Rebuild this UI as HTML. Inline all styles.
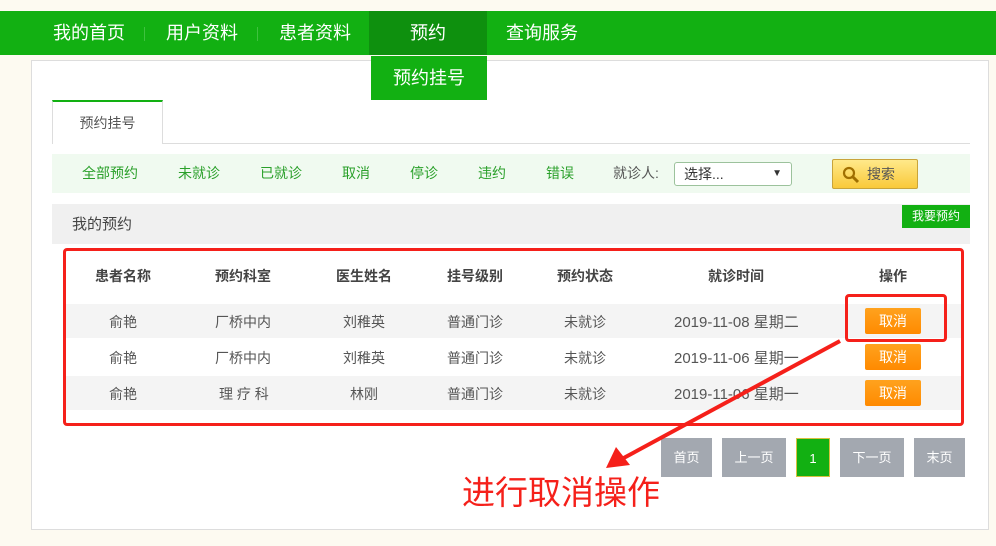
<!DOCTYPE html><html><head><meta charset="utf-8"><style>
*{margin:0;padding:0;box-sizing:border-box}
body{width:996px;height:546px;background:#fdfaf1;font-family:"Liberation Sans","Noto Sans CJK SC",sans-serif;position:relative;overflow:hidden}
.a{position:absolute}
.nav{left:0;top:11px;width:996px;height:44px;background:#12b012}
.nav span{position:absolute;top:0;line-height:44px;color:#fff;font-size:18px}
.sep{position:absolute;top:16px;width:1px;height:14px;background:#3fc23f}
.c{text-align:center}
.th{font-size:14px;color:#444;font-weight:bold}
.td{font-size:14px;color:#555}
.dt{font-size:15px;color:#555}
.btn{background:linear-gradient(#ffa21e,#ff8a00);color:#fff;font-size:14px;border-radius:2px;width:56px;height:26px;line-height:26px;text-align:center}
.pg{top:438px;height:39px;line-height:39px;background:#a3a8b0;color:#fff;font-size:13px;text-align:center}
.f{top:154px;line-height:39px;font-size:14px;color:#2aa02a}
</style></head><body>
<div class="a nav">
<span style="left:53px">我的首页</span><div class="sep" style="left:144px"></div>
<span style="left:166px">用户资料</span><div class="sep" style="left:257px"></div>
<span style="left:279px">患者资料</span>
<div class="a" style="left:369px;top:0;width:118px;height:44px;background:#0e900e"></div>
<span style="left:410px">预约</span>
<span style="left:506px">查询服务</span>
</div>
<div class="a" style="left:31px;top:60px;width:958px;height:470px;background:#fff;border:1px solid #ddd"></div>
<div class="a c" style="left:371px;top:56px;width:116px;height:44px;line-height:44px;background:#12b012;color:#fff;font-size:18px">预约挂号</div>
<div class="a" style="left:52px;top:143px;width:918px;height:1px;background:#ddd"></div>
<div class="a c" style="left:52px;top:100px;width:111px;height:44px;border-top:2px solid #12b012;border-left:1px solid #ddd;border-right:1px solid #ddd;background:#fff;line-height:42px;font-size:14px;color:#555">预约挂号</div>
<div class="a" style="left:52px;top:154px;width:918px;height:39px;background:#f0faf0"></div>
<div class="a f" style="left:82px">全部预约</div><div class="a f" style="left:178px">未就诊</div><div class="a f" style="left:260px">已就诊</div><div class="a f" style="left:342px">取消</div><div class="a f" style="left:410px">停诊</div><div class="a f" style="left:478px">违约</div><div class="a f" style="left:546px">错误</div>
<div class="a f" style="left:613px;color:#555">就诊人:</div>
<div class="a" style="left:674px;top:162px;width:118px;height:24px;border:1px solid #9cc29c;border-radius:3px;background:#fff;font-size:14px;line-height:22px;padding-left:9px;color:#333">选择...<span style="position:absolute;right:9px;font-size:10px">▼</span></div>
<div class="a" style="left:832px;top:159px;width:86px;height:30px;border:1px solid #c9a43a;border-radius:2px;background:linear-gradient(#ffe98a,#f9c93a);font-size:14px;line-height:28px;color:#555;padding-left:34px">搜索
<svg style="position:absolute;left:9px;top:6px" width="18" height="18" viewBox="0 0 18 18"><circle cx="7" cy="7" r="5" fill="none" stroke="#a06f00" stroke-width="2.2"/><path d="M11 11l5 5" stroke="#a06f00" stroke-width="3"/></svg></div>
<div class="a" style="left:52px;top:204px;width:918px;height:40px;background:#f0f0f0;font-size:15px;line-height:42px;padding-left:20px;color:#444">我的预约</div>
<div class="a c" style="left:902px;top:205px;width:68px;height:23px;line-height:23px;background:#12b012;color:#fff;font-size:12px">我要预约</div>
<div class="a" style="left:63px;top:304px;width:900px;height:34px;background:#f4f4f4"></div>
<div class="a" style="left:63px;top:376px;width:900px;height:34px;background:#f4f4f4"></div>
<div class="a th" style="left:95px;top:266px">患者名称</div><div class="a th" style="left:215px;top:266px">预约科室</div><div class="a th" style="left:336px;top:266px">医生姓名</div><div class="a th" style="left:447px;top:266px">挂号级别</div><div class="a th" style="left:557px;top:266px">预约状态</div><div class="a th" style="left:708px;top:266px">就诊时间</div><div class="a th" style="left:879px;top:266px">操作</div>
<div class="a td" style="left:109px;top:312px">俞艳</div><div class="a td" style="left:215px;top:312px">厂桥中内</div><div class="a td" style="left:343px;top:312px">刘稚英</div><div class="a td" style="left:447px;top:312px">普通门诊</div><div class="a td" style="left:564px;top:312px">未就诊</div><div class="a dt" style="left:674px;top:311px">2019-11-08 星期二</div><div class="a btn" style="left:865px;top:308px">取消</div>
<div class="a td" style="left:109px;top:348px">俞艳</div><div class="a td" style="left:215px;top:348px">厂桥中内</div><div class="a td" style="left:343px;top:348px">刘稚英</div><div class="a td" style="left:447px;top:348px">普通门诊</div><div class="a td" style="left:564px;top:348px">未就诊</div><div class="a dt" style="left:674px;top:347px">2019-11-06 星期一</div><div class="a btn" style="left:865px;top:344px">取消</div>
<div class="a td" style="left:219px;top:384px">理 疗 科</div><div class="a td" style="left:109px;top:384px">俞艳</div><div class="a td" style="left:350px;top:384px">林刚</div><div class="a td" style="left:447px;top:384px">普通门诊</div><div class="a td" style="left:564px;top:384px">未就诊</div><div class="a dt" style="left:674px;top:383px">2019-11-06 星期一</div><div class="a btn" style="left:865px;top:380px">取消</div>
<div class="a" style="left:63px;top:248px;width:901px;height:178px;border:3px solid #f5201a;border-radius:4px"></div>
<div class="a" style="left:845px;top:294px;width:102px;height:48px;border:3px solid #f5201a;border-radius:4px"></div>
<div class="a pg" style="left:661px;width:51px">首页</div><div class="a pg" style="left:722px;width:64px">上一页</div><div class="a pg" style="left:796px;width:34px;background:#12b012;border:1px solid #d8c040">1</div><div class="a pg" style="left:840px;width:64px">下一页</div><div class="a pg" style="left:914px;width:51px">末页</div>
<svg class="a" style="left:0;top:0" width="996" height="546"><path d="M840 341L620 460" stroke="#f5201a" stroke-width="4"/><path d="M606 468L616 447L630 465Z" fill="#f5201a"/></svg>
<div class="a" style="left:462px;top:473px;font-size:33px;color:#f5201a;line-height:40px">进行取消操作</div>
</body></html>
